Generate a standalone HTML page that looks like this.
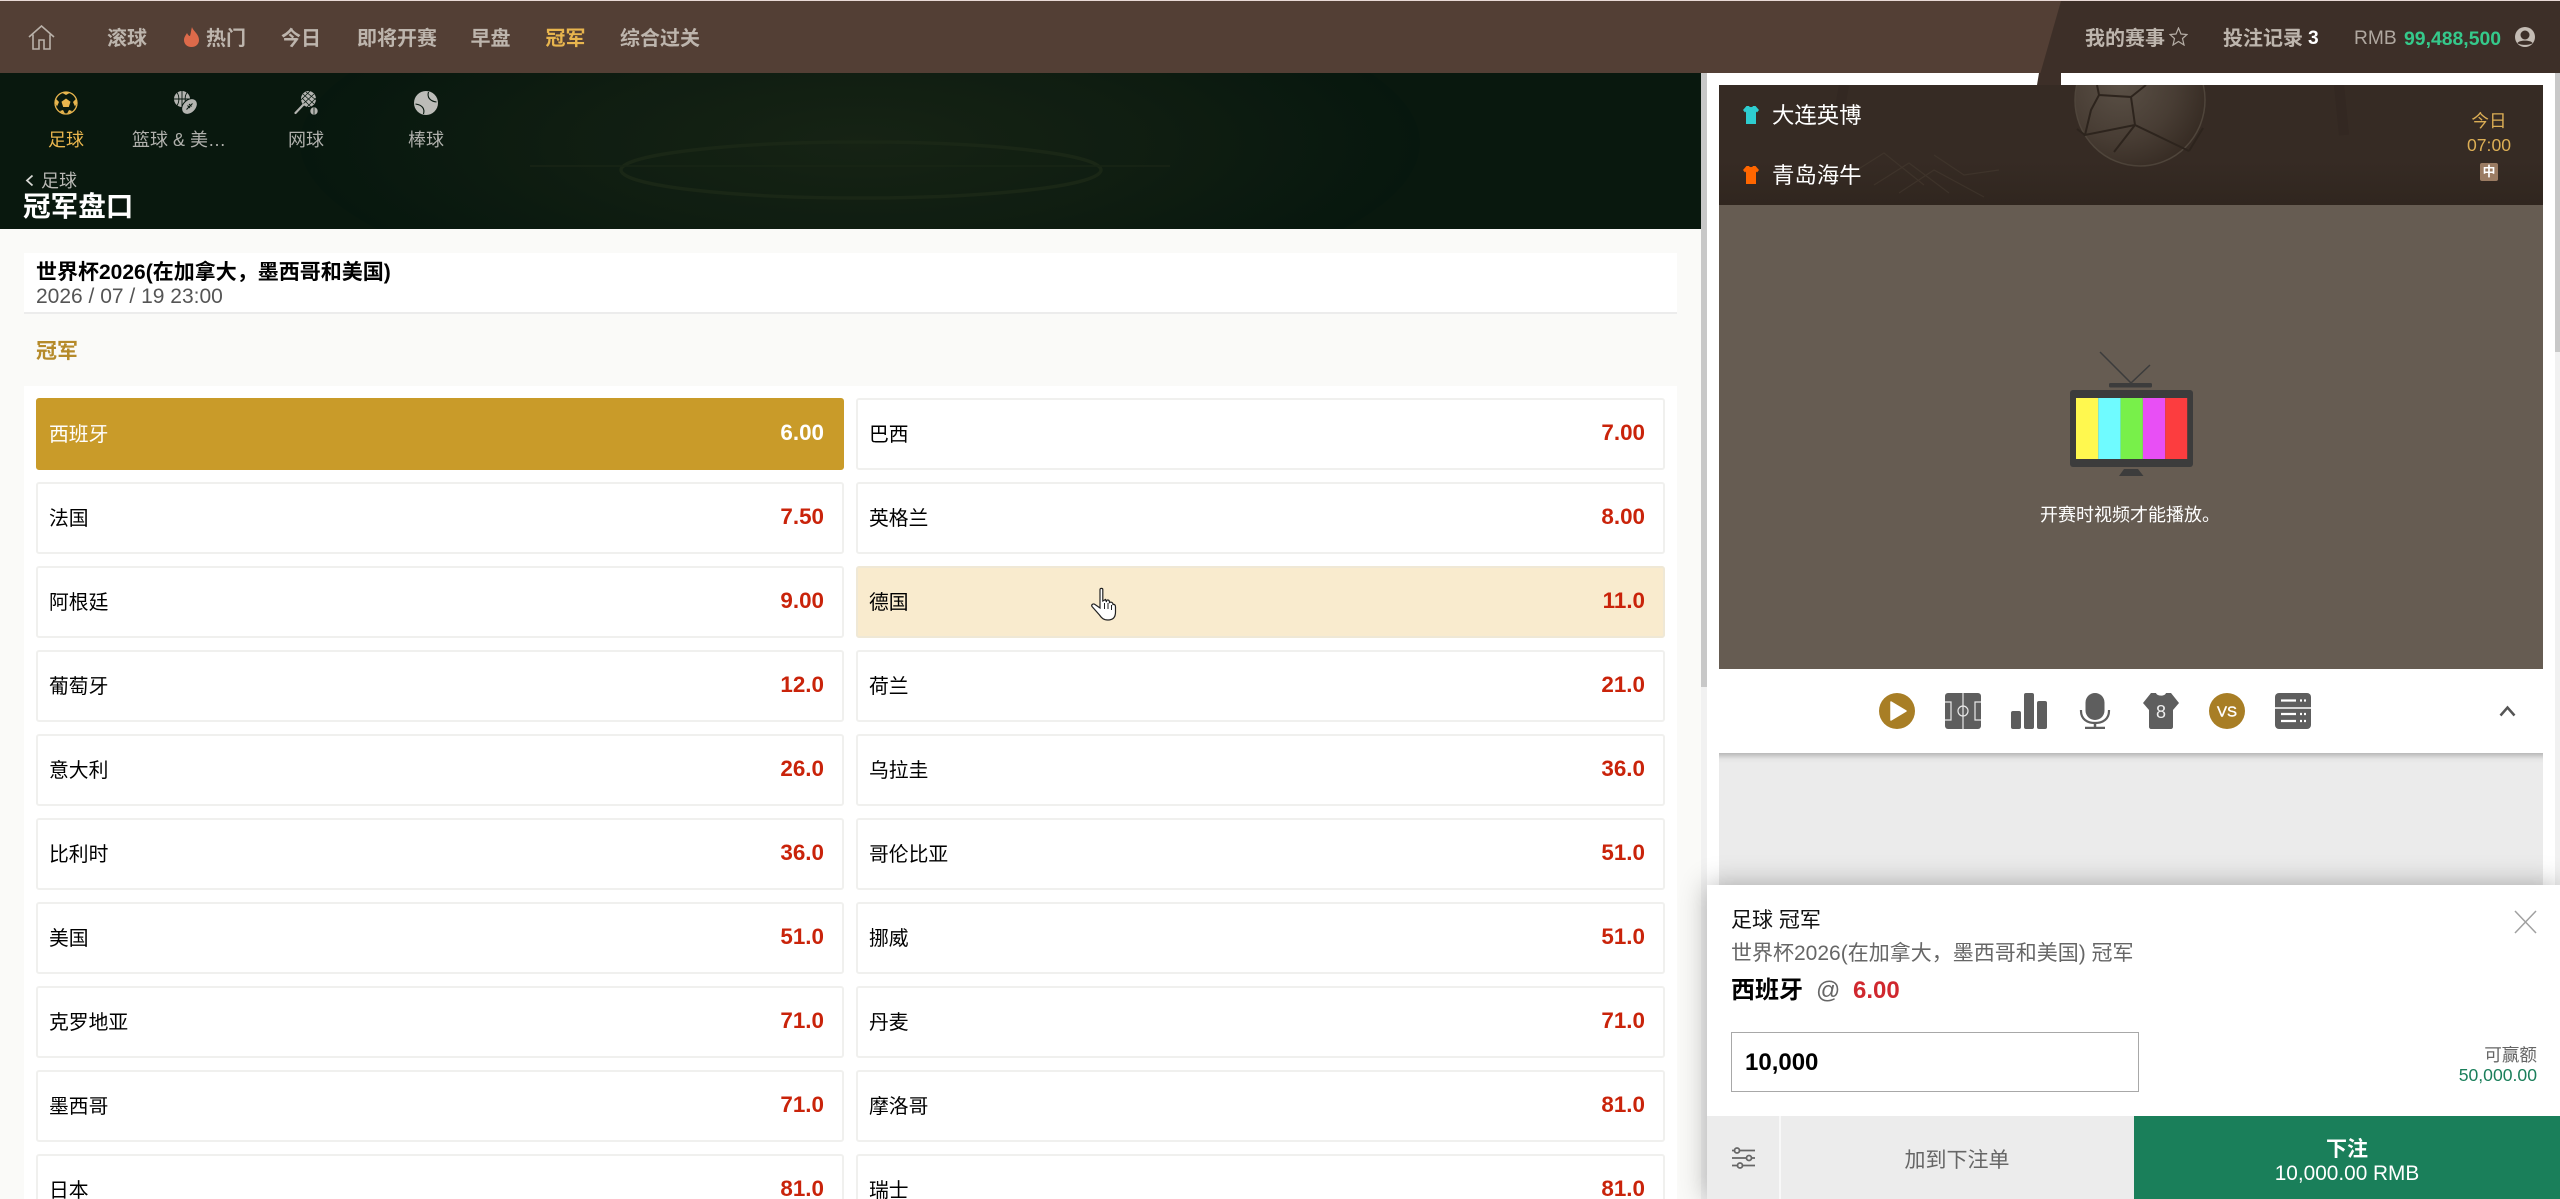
<!DOCTYPE html>
<html lang="zh"><head><meta charset="utf-8"><title>冠军盘口</title>
<style>
html,body{margin:0;padding:0;width:2560px;height:1199px;overflow:hidden;background:#fafaf8}
body{position:relative;font-family:"Liberation Sans","Noto Sans CJK SC","WenQuanYi Zen Hei",sans-serif;font-size:21px;color:#000}
div,span,svg{box-sizing:border-box}
.a{position:absolute}
.t{position:absolute;line-height:30px;height:30px;white-space:nowrap;margin-top:1.5px}
.b{font-weight:700}
.c{transform:translateX(-50%)}
.r{transform:translateX(-100%)}
.n{color:#bdb5ad;font-weight:700;top:22px;font-size:20px}
.s{top:123px;font-size:18px;color:#b0b0ac}
.row{position:absolute;height:72px;width:808px;background:#fff;border:2px solid #f0f0ee;border-radius:3px}
.x{width:809px}
.row i{position:absolute;left:11px;top:20px;font-style:normal;font-size:19.8px;line-height:30px;color:#000}
.row b{position:absolute;right:18px;top:18px;font-size:22.4px;line-height:30px;color:#c9230a}
.row.sel{background:#c99b29;border-color:#c99b29}.row.sel i,.row.sel b{color:#fff}
.row.hov{background:#f9ebce;border-color:#efe8d6}
</style></head><body>

<!-- header -->
<div class="a" style="left:0;top:0;width:2560px;height:73px;background:#533f35;border-top:1px solid #e8d9d6"></div>
<svg class="a" style="left:0;top:0" width="2560" height="90" viewBox="0 0 2560 90"><polygon points="2061,1 2560,1 2560,73 2061,73 2061,85 2037,85" fill="#3d2f28"/></svg>
<svg class="a" style="left:28px;top:25px" width="27" height="25" viewBox="0 0 27 25" fill="none" stroke="#b9b1a9" stroke-width="1.6"><path d="M1 12 13.500 1 26 12M5 9.500V24H11V15H16V24H22V9.500"/></svg>
<span class="t n" style="left:107px">滚球</span>
<svg class="a" style="left:183px;top:27px" width="17" height="20" viewBox="0 0 17 20"><path d="M9 0C10 4 16 7 16 13 16 17 13 20 8.500 20 4 20 1 17 1 13 1 10 3 8 4 6 5 8 6 9 7 9 8 6 8 3 9 0Z" fill="#dd6a4a"/></svg>
<span class="t n" style="left:206px">热门</span>
<span class="t n" style="left:281px">今日</span>
<span class="t n" style="left:357px">即将开赛</span>
<span class="t n" style="left:470.5px">早盘</span>
<span class="t n" style="left:545.5px;color:#e8b54e">冠军</span>
<span class="t n" style="left:620px">综合过关</span>

<span class="t n" style="left:2085px">我的赛事</span>
<svg class="a" style="left:2169px;top:27px" width="19" height="19" viewBox="0 0 19 19"><polygon points="9.500,1 12,7 18,7.500 13.500,11.500 15,18 9.500,14.500 4,18 5.500,11.500 1,7.500 7,7" fill="none" stroke="#b5ada5" stroke-width="1.200"/></svg>
<span class="t n" style="left:2223px">投注记录</span>
<span class="t b" style="left:2308px;top:22px;font-size:19.2px;color:#fff">3</span>
<span class="t" style="left:2354px;top:22px;font-size:19.2px;color:#b0a8a0">RMB</span>
<span class="t b" style="left:2404px;top:22px;font-size:19.4px;color:#35c98b">99,488,500</span>
<svg class="a" style="left:2515px;top:27px" width="20" height="20" viewBox="0 0 20 20"><circle cx="10" cy="10" r="10" fill="#c4bcb4"/><circle cx="10" cy="8" r="4.500" fill="#3d2f28"/><path d="M2.500 16C4 12.800 16 12.800 17.500 16 15.500 18.500 4.500 18.500 2.500 16Z" fill="#3d2f28"/></svg>

<!-- left banner -->
<div class="a" style="left:0;top:73px;width:1701px;height:156px;background:#07170e;overflow:hidden">
<svg width="1701" height="156" viewBox="0 0 1701 156">
<defs><radialGradient id="g1" cx="50%" cy="50%" r="50%"><stop offset="0" stop-color="#162314"/><stop offset=".55" stop-color="#0f1d11"/><stop offset="1" stop-color="#07170e"/></radialGradient></defs>
<rect x="0" y="0" width="1701" height="156" fill="#09180e"/>
<ellipse cx="860" cy="70" rx="560" ry="170" fill="url(#g1)"/>
<ellipse cx="861" cy="97" rx="240" ry="28" fill="none" stroke="#1a2716" stroke-width="3.500"/>
<path d="M530 93H1170" stroke="#182515" stroke-width="1.500"/>
</svg>
</div>
<svg class="a" style="left:54px;top:91px" width="24" height="24" viewBox="0 0 24 24"><circle cx="12" cy="12" r="11" fill="none" stroke="#e8b54e" stroke-width="1.300"/><g fill="#e8b54e"><polygon points="12,7.500 16.500,10.800 14.800,16 9.200,16 7.500,10.800"/><path d="M8 1.800 12 4 16 1.800 12 1Z"/><path d="M21.800 8 19 11 21 15.500 23 12Z"/><path d="M2.200 8 5 11 3 15.500 1 12Z"/><path d="M6 20 9 19 11 22.800 7.500 21.500Z"/><path d="M18 20 15 19 13 22.800 16.500 21.500Z"/></g></svg>
<svg class="a" style="left:174px;top:91px" width="24" height="24" viewBox="0 0 24 24"><circle cx="8" cy="8" r="8" fill="#b4b4b0"/><path d="M0 8H16M8 0V16M3 1.500C5.500 5 5.500 11 3 14.500M13 1.500C10.500 5 10.500 11 13 14.500" stroke="#07170e" stroke-width=".9" fill="none"/><ellipse cx="15.500" cy="15.500" rx="9" ry="6.500" transform="rotate(-45 15.500 15.500)" fill="#b4b4b0" stroke="#07170e" stroke-width="1"/><path d="M12.500 18.500 18.500 12.500M13.500 14.500 16 17M15 13 17.500 15.500" stroke="#07170e" stroke-width="1" fill="none"/></svg>
<svg class="a" style="left:294px;top:91px" width="24" height="24" viewBox="0 0 24 24"><ellipse cx="14.500" cy="8" rx="7.500" ry="8" fill="#b4b4b0"/><path d="M9 3 20 13M8 7 17 16M12 1 22 9M20 3 9 13M22 7 13 16M16 0 7 9" stroke="#07170e" stroke-width=".8"/><path d="M9.500 13.500 1.500 22" stroke="#b4b4b0" stroke-width="2.200" stroke-linecap="round"/><circle cx="20" cy="20" r="3.700" fill="#b4b4b0"/><path d="M20 16.500V23.500" stroke="#07170e" stroke-width=".8"/></svg>
<svg class="a" style="left:414px;top:91px" width="24" height="24" viewBox="0 0 24 24"><circle cx="12" cy="12" r="12" fill="#bcbcb8"/><path d="M14.500 1C13 6 15.500 10 22.500 11M9.500 23C11 18 8.500 14 1.500 13" stroke="#07170e" stroke-width="1.100" fill="none"/></svg>
<span class="t s c" style="left:66px;color:#e8b54e">足球</span>
<span class="t s" style="left:132px">篮球 &amp; 美…</span>
<span class="t s c" style="left:306px">网球</span>
<span class="t s c" style="left:426px">棒球</span>
<svg class="a" style="left:25px;top:174px" width="9" height="13" viewBox="0 0 9 13"><path d="M7.500 1.500 2 6.500 7.500 11.500" fill="none" stroke="#d8d8d4" stroke-width="1.800"/></svg>
<span class="t" style="left:41px;top:164px;font-size:18px;color:#b8b8b4">足球</span>
<span class="t b" style="left:23px;top:190px;font-size:27.6px;color:#fff">冠军盘口</span>

<!-- content -->
<div class="a" style="left:24px;top:253px;width:1653px;height:61px;background:#fff;border-bottom:2px solid #ececec"></div>
<span class="t b" style="left:36px;top:256px">世界杯2026(在加拿大，墨西哥和美国)</span>
<span class="t" style="left:36px;top:280px;color:#555;font-size:21px">2026 / 07 / 19 23:00</span>
<span class="t b" style="left:36px;top:335px;color:#b58a2a">冠军</span>
<div class="a" style="left:24px;top:386px;width:1653px;height:813px;background:#fff"></div>

<div class="row sel" style="left:36px;top:398px"><i>西班牙</i><b>6.00</b></div><div class="row x" style="left:856px;top:398px"><i>巴西</i><b>7.00</b></div>
<div class="row" style="left:36px;top:482px"><i>法国</i><b>7.50</b></div><div class="row x" style="left:856px;top:482px"><i>英格兰</i><b>8.00</b></div>
<div class="row" style="left:36px;top:566px"><i>阿根廷</i><b>9.00</b></div><div class="row hov x" style="left:856px;top:566px"><i>德国</i><b>11.0</b></div>
<div class="row" style="left:36px;top:650px"><i>葡萄牙</i><b>12.0</b></div><div class="row x" style="left:856px;top:650px"><i>荷兰</i><b>21.0</b></div>
<div class="row" style="left:36px;top:734px"><i>意大利</i><b>26.0</b></div><div class="row x" style="left:856px;top:734px"><i>乌拉圭</i><b>36.0</b></div>
<div class="row" style="left:36px;top:818px"><i>比利时</i><b>36.0</b></div><div class="row x" style="left:856px;top:818px"><i>哥伦比亚</i><b>51.0</b></div>
<div class="row" style="left:36px;top:902px"><i>美国</i><b>51.0</b></div><div class="row x" style="left:856px;top:902px"><i>挪威</i><b>51.0</b></div>
<div class="row" style="left:36px;top:986px"><i>克罗地亚</i><b>71.0</b></div><div class="row x" style="left:856px;top:986px"><i>丹麦</i><b>71.0</b></div>
<div class="row" style="left:36px;top:1070px"><i>墨西哥</i><b>71.0</b></div><div class="row x" style="left:856px;top:1070px"><i>摩洛哥</i><b>81.0</b></div>
<div class="row" style="left:36px;top:1154px"><i>日本</i><b>81.0</b></div><div class="row x" style="left:856px;top:1154px"><i>瑞士</i><b>81.0</b></div>

<svg class="a" style="left:1090px;top:587px" width="28" height="34" viewBox="0 0 28 34"><path d="M10 2.500C10 1 12.800 1 12.800 2.500V14L15.500 12.500 16.500 15V13.500C18 12.500 19.500 13 19.500 15.500 21 14.500 23 15.500 23 17.500 24.500 17 25.500 18 25.500 20V25C25.500 30 23 33 18 33 13.500 33 11.500 31 9.500 28L2 19.500C1 18 3 16 5 17.500L10 21Z" fill="#fff" stroke="#222" stroke-width="1.200"/><path d="M14.500 16V22M18 16V22M21.500 18V23" stroke="#222" stroke-width="1"/></svg>

<!-- scrollbars -->
<div class="a" style="left:1701px;top:73px;width:6px;height:1126px;background:#f1f1f1"></div>
<div class="a" style="left:1701px;top:73px;width:6px;height:614px;background:#c8c8c8"></div>
<div class="a" style="left:1707px;top:73px;width:848px;height:1126px;background:#fff"></div>
<div class="a" style="left:2555px;top:73px;width:5px;height:1126px;background:#f1f1f1"></div>
<div class="a" style="left:2555px;top:73px;width:5px;height:279px;background:#c8c8c8"></div>
<svg class="a" style="left:2030px;top:73px" width="40" height="12" viewBox="0 0 40 12"><polygon points="9,0 31,0 31,12 7,12" fill="#3d2f28"/></svg>

<!-- match panel -->
<div class="a" style="left:1719px;top:85px;width:824px;height:120px;background:#362b24;overflow:hidden">
<svg width="824" height="120" viewBox="0 0 824 120">
<defs><radialGradient id="g2" cx="35%" cy="38%" r="70%"><stop offset="0" stop-color="#5a5046"/><stop offset=".6" stop-color="#483d34"/><stop offset="1" stop-color="#362b23"/></radialGradient>
<linearGradient id="g3" x1="0" y1="0" x2="0" y2="1"><stop offset="0" stop-color="#30261f" stop-opacity="0"/><stop offset="1" stop-color="#30261f"/></linearGradient></defs>
<ellipse cx="421" cy="15" rx="65" ry="66" fill="url(#g2)" stroke="#4f453b" stroke-width="1.500"/>
<path d="M380 10 412 12 416 40 366 50 372 25ZM416 40 395 67M416 40 470 66M412 12 427 0M366 50 358 44M380 10 378 0M470 66 484 43" fill="none" stroke="#2d241d" stroke-width="2"/>
<rect x="0" y="76" width="824" height="44" fill="url(#g3)"/>
<path d="M130 90 165 68 205 100M155 100 190 78 230 108M180 108 215 85 265 112M215 70 245 90 280 85" fill="none" stroke="#4b4036" stroke-width="1.200" opacity=".45"/>
<path d="M125 0 118 40M620 0 625 50" fill="none" stroke="#2f2620" stroke-width="10" opacity=".5"/>
</svg></div>
<svg class="a" style="left:1743px;top:106px" width="16" height="18" viewBox="0 0 16 18"><path d="M3.500 0H6C6.500 1.500 9.500 1.500 10 0H12.500L16 4 14 6.500 13 5.500V18H3V5.500L2 6.500 0 4Z" fill="#2ecdd0"/></svg>
<svg class="a" style="left:1743px;top:166px" width="16" height="18" viewBox="0 0 16 18"><path d="M3.500 0H6C6.500 1.500 9.500 1.500 10 0H12.500L16 4 14 6.500 13 5.500V18H3V5.500L2 6.500 0 4Z" fill="#ff6600"/></svg>
<span class="t" style="left:1772px;top:99px;font-size:22.4px;color:#fff">大连英博</span>
<span class="t" style="left:1772px;top:159px;font-size:22.4px;color:#fff">青岛海牛</span>
<span class="t c" style="left:2489px;top:104.5px;font-size:17.6px;color:#dcae55">今日</span>
<span class="t c" style="left:2489px;top:128.5px;font-size:17.6px;color:#dcae55">07:00</span>
<div class="a" style="left:2480px;top:163px;width:18px;height:18px;background:#9b7c63;border-radius:2px;color:#fff;font-size:12.8px;font-weight:700;line-height:18px;text-align:center">中</div>

<!-- video -->
<div class="a" style="left:1719px;top:205px;width:824px;height:464px;background:#665c52"></div>
<svg class="a" style="left:2060px;top:345px" width="145" height="140" viewBox="2060 345 145 140">
<path d="M2100 352 2131 383M2150 365 2131 383" stroke="#3c3c3c" stroke-width="1.500"/>
<rect x="2109" y="383" width="43" height="4.500" rx="1.500" fill="#3c3c3c"/>
<rect x="2070" y="390" width="123" height="77" rx="3" fill="#3c3c3c"/>
<rect x="2076" y="398" width="22.300" height="61" fill="#fff84f"/><rect x="2098.300" y="398" width="22.300" height="61" fill="#6ffbff"/><rect x="2120.600" y="398" width="22.300" height="61" fill="#78f04a"/><rect x="2142.900" y="398" width="22.300" height="61" fill="#e84ff5"/><rect x="2165.200" y="398" width="22" height="61" fill="#fc3d3f"/>
<path d="M2124 469H2138L2143.500 476H2119Z" fill="#3c3c3c"/>
</svg>
<span class="t c" style="left:2130px;top:498px;font-size:18px;color:#fff">开赛时视频才能播放。</span>

<!-- icon strip -->
<div class="a" style="left:1719px;top:669px;width:824px;height:84px;background:#fff"></div>
<svg class="a" style="left:1879px;top:693px" width="36" height="36" viewBox="0 0 36 36"><circle cx="18" cy="18" r="18" fill="#a87e25"/><path d="M12 9V27L27 18Z" fill="#fff" stroke="#fff" stroke-width="1.500" stroke-linejoin="round"/></svg>
<svg class="a" style="left:1945px;top:693px" width="36" height="36" viewBox="0 0 36 36"><rect width="36" height="36" rx="3" fill="#5e5e5e"/><path d="M18 0V36M0 9H6V27H0M36 9H30V27H36" stroke="#e8e8e8" stroke-width="1.200" fill="none"/><circle cx="18" cy="18" r="5" fill="none" stroke="#e8e8e8" stroke-width="1.200"/></svg>
<svg class="a" style="left:2011px;top:693px" width="36" height="36" viewBox="0 0 36 36" fill="#5e5e5e"><rect y="18" width="10" height="18" rx="2"/><rect x="13" width="10" height="36" rx="2"/><rect x="26" y="8" width="10" height="28" rx="2"/></svg>
<svg class="a" style="left:2077px;top:693px" width="36" height="36" viewBox="0 0 36 36"><rect x="8.500" y="0" width="19" height="27" rx="9.500" fill="#5e5e5e"/><path d="M4 17V18C4 26 10 30 18 30 26 30 32 26 32 18V17" fill="none" stroke="#5e5e5e" stroke-width="2.200"/><path d="M18 30V34M8 35H28" stroke="#5e5e5e" stroke-width="2.500"/></svg>
<svg class="a" style="left:2143px;top:693px" width="36" height="36" viewBox="0 0 36 36"><path d="M8 0H13C14 3.500 22 3.500 23 0H28L36 10 30 17V34C30 35 29 36 28 36H8C7 36 6 35 6 34V17L0 10Z" fill="#5e5e5e"/><text x="18" y="25" text-anchor="middle" font-family="Liberation Sans" font-size="18" fill="#eee">8</text></svg>
<svg class="a" style="left:2209px;top:693px" width="36" height="36" viewBox="0 0 36 36"><circle cx="18" cy="18" r="18" fill="#a87e25"/><text x="18" y="23.500" text-anchor="middle" font-family="Liberation Sans" font-size="15" fill="#fff" stroke="#fff" stroke-width=".4">VS</text></svg>
<svg class="a" style="left:2275px;top:693px" width="36" height="36" viewBox="0 0 36 36"><rect width="36" height="36" rx="4" fill="#5e5e5e"/><path d="M0 15H36" stroke="#fff" stroke-width="1.500"/><path d="M6 7.500H21M6 21H21M6 28H21" stroke="#fff" stroke-width="2.200"/><path d="M25 7.500H27M29 7.500H31M25 21H27M29 21H31M25 28H27M29 28H31" stroke="#fff" stroke-width="2.200"/></svg>
<svg class="a" style="left:2499px;top:705px" width="17" height="12" viewBox="0 0 17 12"><path d="M1.500 10.500 8.500 2.500 15.500 10.500" fill="none" stroke="#555" stroke-width="2.500"/></svg>

<div class="a" style="left:1719px;top:753px;width:824px;height:135px;background:linear-gradient(#b8b8b8 0,#e4e4e4 6px,#ebebeb 10px,#ebebeb 135px)"></div>

<!-- bet slip -->
<div class="a" style="left:1707px;top:885px;width:853px;height:314px;background:#fff;box-shadow:0 0 26px rgba(0,0,0,.3)"></div>
<span class="t" style="left:1731px;top:904.5px;color:#111">足球 冠军</span>
<span class="t" style="left:1731px;top:937px;color:#666">世界杯2026(在加拿大，墨西哥和美国) 冠军</span>
<span class="t b" style="left:1731px;top:974px;font-size:24px;color:#000">西班牙</span>
<span class="t" style="left:1816px;top:974px;font-size:24px;color:#666">@</span>
<span class="t b" style="left:1853px;top:974px;font-size:24px;color:#d0282e">6.00</span>
<svg class="a" style="left:2514px;top:910px" width="23" height="24" viewBox="0 0 23 24"><path d="M1 1 22 23M22 1 1 23" stroke="#a0a0a0" stroke-width="1.500"/></svg>
<div class="a" style="left:1731px;top:1032px;width:408px;height:60px;border:1px solid #a8a8a8;background:#fff"></div>
<span class="t b" style="left:1745px;top:1046px;font-size:24px">10,000</span>
<span class="t r" style="left:2537px;top:1038px;font-size:17.6px;color:#666">可赢额</span>
<span class="t r" style="left:2537px;top:1058px;font-size:17.6px;color:#1b7f5b">50,000.00</span>
<div class="a" style="left:1707px;top:1116px;width:427px;height:83px;background:#ececec"></div>
<div class="a" style="left:1779px;top:1116px;width:2px;height:83px;background:#f8f8f8"></div>
<svg class="a" style="left:1731px;top:1147px" width="25" height="22" viewBox="0 0 25 22" fill="none" stroke="#666" stroke-width="1.800"><path d="M1 3.500H24M1 11H24M1 18.500H24"/><circle cx="6" cy="3.500" r="2.500" fill="#ececec"/><circle cx="18" cy="11" r="2.500" fill="#ececec"/><circle cx="9" cy="18.500" r="2.500" fill="#ececec"/></svg>
<span class="t c" style="left:1957px;top:1144px;color:#666">加到下注单</span>
<div class="a" style="left:2134px;top:1116px;width:426px;height:83px;background:#1a7f5a"></div>
<span class="t b c" style="left:2347px;top:1133px;color:#fff">下注</span>
<span class="t c" style="left:2347px;top:1157px;color:#fff;font-size:20.8px">10,000.00 RMB</span>
</body></html>
